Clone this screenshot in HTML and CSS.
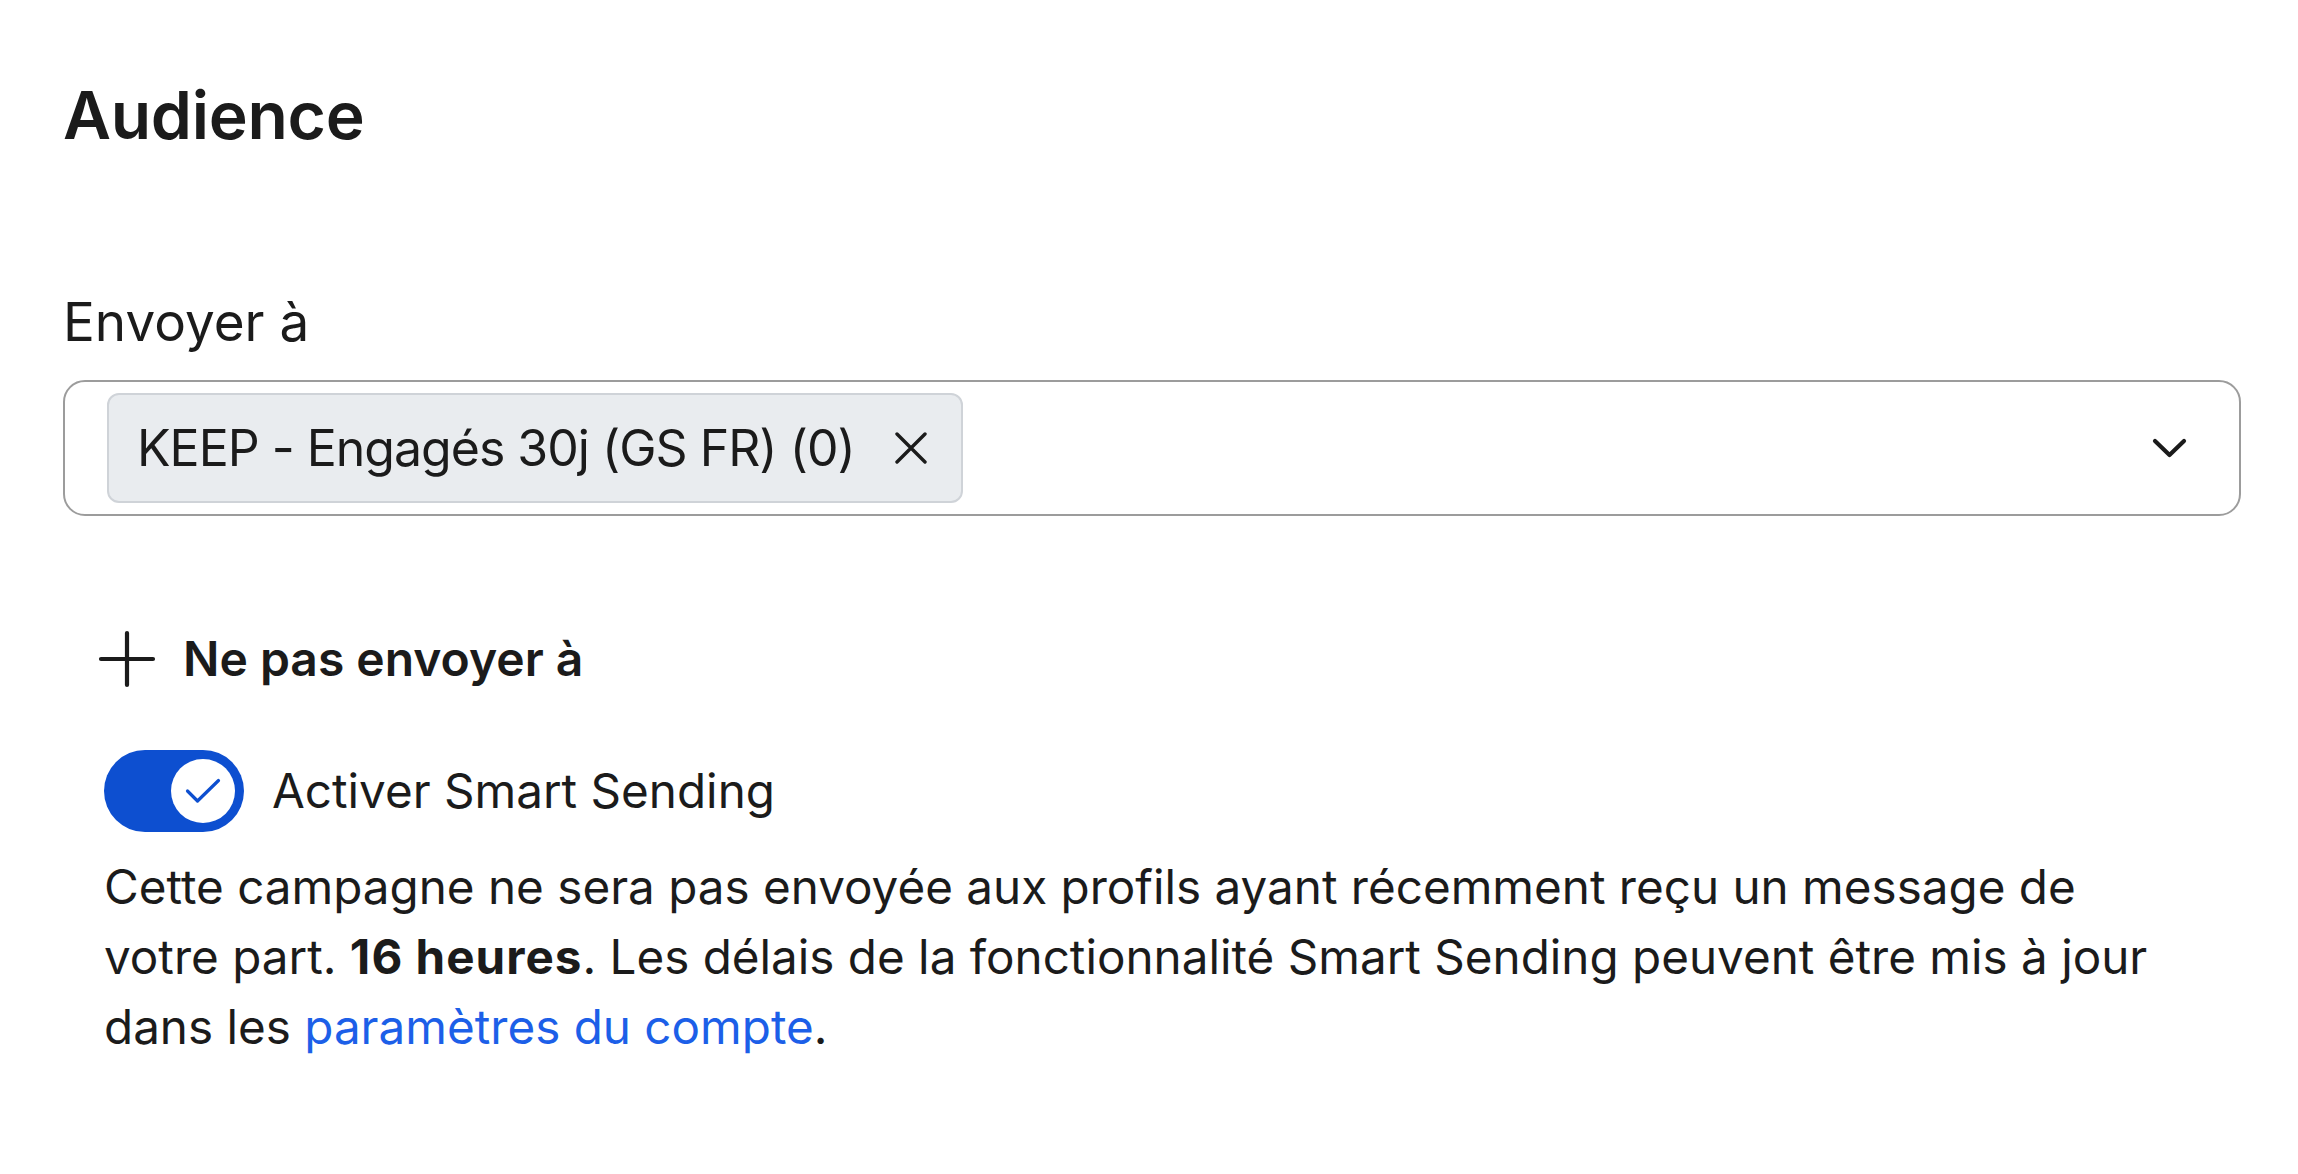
FILE: index.html
```html
<!DOCTYPE html>
<html lang="fr">
<head>
<meta charset="utf-8">
<title>Audience</title>
<link rel="stylesheet" href="styles.css">
</head>
<body>
<main class="panel">
  <h1 class="title">Audience</h1>

  <label class="field-label">Envoyer à</label>
  <div class="select">
    <div class="chips">
      <span class="chip">
        <span class="chip-text">KEEP - Engagés 30j (GS FR) (0)</span>
        <svg class="chip-x" viewBox="0 0 34 32" width="34" height="32" aria-hidden="true">
          <path d="M3 2 L31 30 M31 2 L3 30" stroke="#1b1b1b" stroke-width="3.4" stroke-linecap="round" fill="none"/>
        </svg>
      </span>
    </div>
    <svg class="chevron" viewBox="0 0 37 20" width="37" height="20" aria-hidden="true">
      <path d="M4 3 L18.5 17 L33 3" stroke="#1b1b1b" stroke-width="4.2" stroke-linecap="round" stroke-linejoin="round" fill="none"/>
    </svg>
  </div>

  <section class="lower">
    <div class="exclude" role="button" tabindex="0">
      <svg class="plus" viewBox="0 0 58 58" width="58" height="58" aria-hidden="true">
        <path d="M29 3 V55 M3 29 H55" stroke="#1b1b1b" stroke-width="4.2" stroke-linecap="round" fill="none"/>
      </svg>
      <span class="exclude-label">Ne pas envoyer à</span>
    </div>

    <div class="smart">
      <div class="toggle-row">
        <span class="toggle" role="switch" aria-checked="true">
          <span class="knob">
            <svg viewBox="0 0 36 26" width="36" height="26" aria-hidden="true">
              <path d="M2.5 13 L12.5 23 L33.5 2.5" stroke="#0d4fd0" stroke-width="3.2" stroke-linecap="round" stroke-linejoin="round" fill="none"/>
            </svg>
          </span>
        </span>
        <span class="toggle-label">Activer Smart Sending</span>
      </div>
      <p class="desc">Cette campagne ne sera pas envoyée aux profils ayant récemment reçu un message de votre part. <strong>16 heures</strong>. Les délais de la fonctionnalité Smart Sending peuvent être mis à jour dans les <a href="#" class="link">paramètres du compte</a>.</p>
    </div>
  </section>
</main>
</body>
</html>
```

FILE: styles.css
```css
* { box-sizing: border-box; }

html, body {
  margin: 0;
  padding: 0;
  background: #ffffff;
}

body {
  font-family: Inter, "Noto Sans", "Liberation Sans", sans-serif;
  color: #1b1b1b;
}

.panel {
  padding: 75px 57px 0 63px;
}

.title {
  margin: 0;
  font-size: 66px;
  line-height: 80px;
  font-weight: 600;
  letter-spacing: -0.3px;
}

.field-label {
  display: block;
  margin-top: 135px;
  font-size: 53px;
  line-height: 64px;
  font-weight: 400;
}

.select {
  margin-top: 26px;
  height: 136px;
  border: 2px solid #9c9c9c;
  border-radius: 22px;
  padding: 0 51px 0 42px;
  display: flex;
  align-items: center;
  justify-content: space-between;
}

.chips {
  display: flex;
  align-items: center;
}

.chip {
  display: inline-flex;
  align-items: center;
  gap: 39px;
  height: 110px;
  padding: 0 33px 0 28px;
  background: #e9ecef;
  border: 2px solid #cfd3d8;
  border-radius: 12px;
}

.chip-text {
  font-size: 50px;
  line-height: 64px;
  letter-spacing: -1px;
}

.chip-x { display: block; }
.chevron { display: block; }

.lower {
  padding-left: 35px;
}

.exclude {
  margin-top: 114px;
  display: flex;
  align-items: center;
  gap: 27px;
  cursor: pointer;
}

.exclude-label {
  font-size: 48px;
  line-height: 58px;
  font-weight: 600;
}

.plus { display: block; flex-shrink: 0; }

.smart {
  padding-left: 6px;
  margin-right: 66px;
}

.toggle-row {
  margin-top: 62px;
  display: flex;
  align-items: center;
  gap: 28px;
}

.toggle {
  width: 140px;
  height: 82px;
  border-radius: 41px;
  background: #0d4fd0;
  display: flex;
  align-items: center;
  justify-content: flex-end;
  padding-right: 9px;
  flex-shrink: 0;
}

.knob {
  width: 64px;
  height: 64px;
  border-radius: 50%;
  background: #ffffff;
  display: flex;
  align-items: center;
  justify-content: center;
}

.knob svg { display: block; }

.toggle-label {
  font-size: 47.6px;
  line-height: 60px;
}

.desc {
  margin: 20px 0 0;
  font-size: 47.6px;
  line-height: 70px;
}

.desc strong {
  font-weight: 700;
  letter-spacing: 1px;
}

.link {
  color: #1c5fe8;
  text-decoration: none;
}
```
